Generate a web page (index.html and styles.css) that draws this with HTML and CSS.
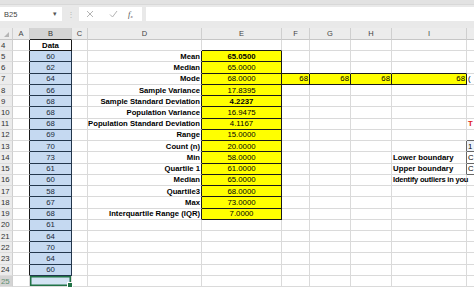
FILE: index.html
```html
<!DOCTYPE html>
<html>
<head>
<meta charset="utf-8">
<link rel="stylesheet" href="styles.css">
</head>
<body>
<div class="top">
  <div class="ribbon"></div>
  <div class="fbar">
    <div class="namebox"><span>B25</span><span class="arrow">▾</span></div>
    <div class="dots">⋮</div>
    <div class="btns">
      <svg class="ic x" width="8" height="8" viewBox="0 0 8 8"><path d="M1 1L7 7M7 1L1 7" stroke="#b4b4b4" stroke-width="1" fill="none"/></svg>
      <svg class="ic ck" width="9" height="8" viewBox="0 0 9 8"><path d="M1 4.5L3.5 7L8 1" stroke="#b4b4b4" stroke-width="1" fill="none"/></svg>
      <span class="fx">f<sub>x</sub></span>
    </div>
    <div class="input"></div>
  </div>
</div>
<div class="sheet">
<table>
<colgroup>
<col class="c-rh"><col class="c-a"><col class="c-b"><col class="c-c"><col class="c-d"><col class="c-e"><col class="c-f"><col class="c-g"><col class="c-h"><col class="c-i"><col class="c-j">
</colgroup>
<tr class="hdr"><th class="corner"><span class="tri"></span></th><th>A</th><th class="sel bk">B</th><th>C</th><th>D</th><th>E</th><th>F</th><th>G</th><th>H</th><th>I</th><th></th></tr>
<tr><th class="rh">4</th><td class="rk"></td><td class="head rk bk">Data</td><td></td><td></td><td class="bk"></td><td></td><td></td><td></td><td></td><td></td></tr>
<tr><th class="rh">5</th><td class="rk"></td><td class="b">60</td><td></td><td class="lbl rk">Mean</td><td class="y strong">65.0500</td><td></td><td></td><td></td><td></td><td></td></tr>
<tr><th class="rh">6</th><td class="rk"></td><td class="b">62</td><td></td><td class="lbl rk">Median</td><td class="y">65.0000</td><td class="bk"></td><td class="bk"></td><td class="bk"></td><td class="bk"></td><td></td></tr>
<tr><th class="rh">7</th><td class="rk"></td><td class="b">64</td><td></td><td class="lbl rk">Mode</td><td class="y">68.0000</td><td class="y num">68</td><td class="y num">68</td><td class="y num">68</td><td class="y num">68</td><td class="txt">(</td></tr>
<tr><th class="rh">8</th><td class="rk"></td><td class="b">66</td><td></td><td class="lbl rk">Sample Variance</td><td class="y">17.8395</td><td></td><td></td><td></td><td></td><td></td></tr>
<tr><th class="rh">9</th><td class="rk"></td><td class="b">68</td><td></td><td class="lbl rk">Sample Standard Deviation</td><td class="y strong">4.2237</td><td></td><td></td><td></td><td></td><td></td></tr>
<tr><th class="rh">10</th><td class="rk"></td><td class="b">68</td><td></td><td class="lbl rk">Population Variance</td><td class="y">16.9475</td><td></td><td></td><td></td><td></td><td></td></tr>
<tr><th class="rh">11</th><td class="rk"></td><td class="b">68</td><td></td><td class="lbl rk">Population Standard Deviation</td><td class="y">4.1167</td><td></td><td></td><td></td><td></td><td class="red">T</td></tr>
<tr><th class="rh">12</th><td class="rk"></td><td class="b">69</td><td></td><td class="lbl rk">Range</td><td class="y">15.0000</td><td></td><td></td><td></td><td></td><td class="bg"></td></tr>
<tr><th class="rh">13</th><td class="rk"></td><td class="b">70</td><td></td><td class="lbl rk">Count (n)</td><td class="y">20.0000</td><td></td><td></td><td></td><td class="rg"></td><td class="box lb">1</td></tr>
<tr><th class="rh">14</th><td class="rk"></td><td class="b">73</td><td></td><td class="lbl rk">Min</td><td class="y">58.0000</td><td></td><td></td><td></td><td class="txt strong rg">Lower boundary</td><td class="box">C</td></tr>
<tr><th class="rh">15</th><td class="rk"></td><td class="b">61</td><td></td><td class="lbl rk">Quartile 1</td><td class="y">61.0000</td><td></td><td></td><td></td><td class="txt strong rg">Upper boundary</td><td class="box">C</td></tr>
<tr><th class="rh">16</th><td class="rk"></td><td class="b">60</td><td></td><td class="lbl rk">Median</td><td class="y">65.0000</td><td></td><td></td><td></td><td class="txt strong tight">Identify outliers in you</td><td></td></tr>
<tr><th class="rh">17</th><td class="rk"></td><td class="b">58</td><td></td><td class="lbl rk">Quartile3</td><td class="y">68.0000</td><td></td><td></td><td></td><td></td><td></td></tr>
<tr><th class="rh">18</th><td class="rk"></td><td class="b">67</td><td></td><td class="lbl rk">Max</td><td class="y">73.0000</td><td></td><td></td><td></td><td></td><td></td></tr>
<tr><th class="rh">19</th><td class="rk"></td><td class="b">68</td><td></td><td class="lbl rk">Interquartile Range (IQR)</td><td class="y">7.0000</td><td></td><td></td><td></td><td></td><td></td></tr>
<tr><th class="rh">20</th><td class="rk"></td><td class="b">61</td><td></td><td></td><td></td><td></td><td></td><td></td><td></td><td></td></tr>
<tr><th class="rh">21</th><td class="rk"></td><td class="b">64</td><td></td><td></td><td></td><td></td><td></td><td></td><td></td><td></td></tr>
<tr><th class="rh">22</th><td class="rk"></td><td class="b">70</td><td></td><td></td><td></td><td></td><td></td><td></td><td></td><td></td></tr>
<tr><th class="rh">23</th><td class="rk"></td><td class="b">64</td><td></td><td></td><td></td><td></td><td></td><td></td><td></td><td></td></tr>
<tr><th class="rh">24</th><td class="rk"></td><td class="b">60</td><td></td><td></td><td></td><td></td><td></td><td></td><td></td><td></td></tr>
<tr><th class="rh selrow">25</th><td></td><td class="active"><span class="handle"></span></td><td></td><td></td><td></td><td></td><td></td><td></td><td></td><td></td></tr>
</table>
</div>
</body>
</html>
```
FILE: styles.css
```css
html, body {
  margin: 0;
  padding: 0;
}
body {
  width: 474px;
  height: 287px;
  overflow: hidden;
  background: #ffffff;
  font-family: "Liberation Sans", Arial, sans-serif;
  color: #000;
}
.top {
  height: 28px;
  background: #e9e9e9;
}
.ribbon {
  height: 4px;
  background: #e2e2e2;
  border-bottom: 1px solid #d8d8d8;
}
.fbar {
  display: flex;
  align-items: stretch;
  height: 14px;
  margin-top: 2px;
}
.namebox {
  width: 62px;
  background: #fff;
  display: flex;
  align-items: center;
  justify-content: space-between;
  padding: 0 5px 0 4px;
  box-sizing: border-box;
  font-size: 7.5px;
  color: #444;
}
.namebox .arrow {
  font-size: 7px;
  color: #555;
}
.dots {
  width: 17px;
  display: flex;
  align-items: center;
  justify-content: center;
  color: #b8b8b8;
  font-size: 8px;
}
.btns {
  width: 63px;
  background: #fff;
  display: flex;
  align-items: center;
  padding-left: 7px;
  box-sizing: border-box;
}
.btns .x { margin-right: 15px; }
.btns .ck { margin-right: 10px; }
.fx {
  font-family: "Liberation Serif", serif;
  font-style: italic;
  font-size: 8.5px;
  color: #555;
}
.fx sub { font-size: 5px; vertical-align: -1px; }
.input {
  flex: 1;
  margin-left: 4px;
  background: #fff;
}
.sheet {
  overflow: hidden;
  width: 474px;
}
table {
  table-layout: fixed;
  border-collapse: separate;
  border-spacing: 0;
  width: 487px;
  font-size: 7.8px;
}
.c-rh { width: 13px; }
.c-a { width: 17px; }
.c-b { width: 42px; }
.c-c { width: 16px; }
.c-d { width: 114px; }
.c-e { width: 80px; }
.c-f { width: 28px; }
.c-g { width: 41px; }
.c-h { width: 41px; }
.c-i { width: 75px; }
.c-j { width: 20px; }
tr { height: 11.24px; }
tr.hdr { height: 12px; }
td, th {
  padding: 0;
  line-height: 9px;
  white-space: nowrap;
  overflow: visible;
  border-right: 1px solid #dadada;
  border-bottom: 1px solid #dadada;
  text-align: center;
  font-weight: normal;
}
.hdr th {
  background: #ececec;
  color: #444;
  font-size: 7.5px;
  border-right: 1px solid #cfcfcf;
  border-bottom: 1px solid #c6c6c6;
}
.hdr th.sel {
  background: #d4d4d4;
  color: #333;
}
.corner { position: relative; }
.tri {
  position: absolute;
  right: 3px;
  bottom: 2px;
  width: 0;
  height: 0;
  border-left: 5px solid transparent;
  border-bottom: 5px solid #b5b5b5;
}
th.rh {
  background: #ececec;
  color: #333;
  font-size: 7.8px;
  text-align: left;
  padding-left: 1px;
  border-right: 1px solid #cfcfcf;
  border-bottom: 1px solid #dcdcdc;
}
th.selrow {
  background: #d4d4d4;
  color: #5f8f6f;
}
.rk { border-right-color: #1a1a1a; }
.bk { border-bottom-color: #1a1a1a; }
.hdr th.bk { border-bottom-color: #222; }
.rg { border-right-color: #666; }
.bg { border-bottom-color: #666; }
.head {
  font-weight: bold;
}
.b {
  background: #c5d9f1;
  border-right-color: #22364c;
  border-bottom-color: #22364c;
  color: #1c2a3a;
}
.lbl {
  font-weight: bold;
  font-size: 7.7px;
  text-align: right;
  padding-right: 1px;
}
.y {
  background: #ffff00;
  border-right-color: #1a1a1a;
  border-bottom-color: #1a1a1a;
}
.num {
  text-align: right;
  padding-right: 1px;
}
.strong { font-weight: bold; }
.txt { text-align: left; padding-left: 1px; }
.tight { letter-spacing: -0.2px; font-size: 7.5px; }
.red {
  color: #e02020;
  font-weight: bold;
  text-align: left;
  padding-left: 1px;
}
.box {
  text-align: left;
  padding-left: 1px;
  border-right-color: #666;
  border-bottom-color: #666;
}
.box.lb { background: #eef3fa; }
.active {
  position: relative;
  background: #d3e3f3;
  box-shadow: inset 0 0 0 1.5px #217346;
}
.handle {
  position: absolute;
  right: -2px;
  bottom: -2px;
  width: 4px;
  height: 4px;
  background: #217346;
  border: 1px solid #fff;
}
```
